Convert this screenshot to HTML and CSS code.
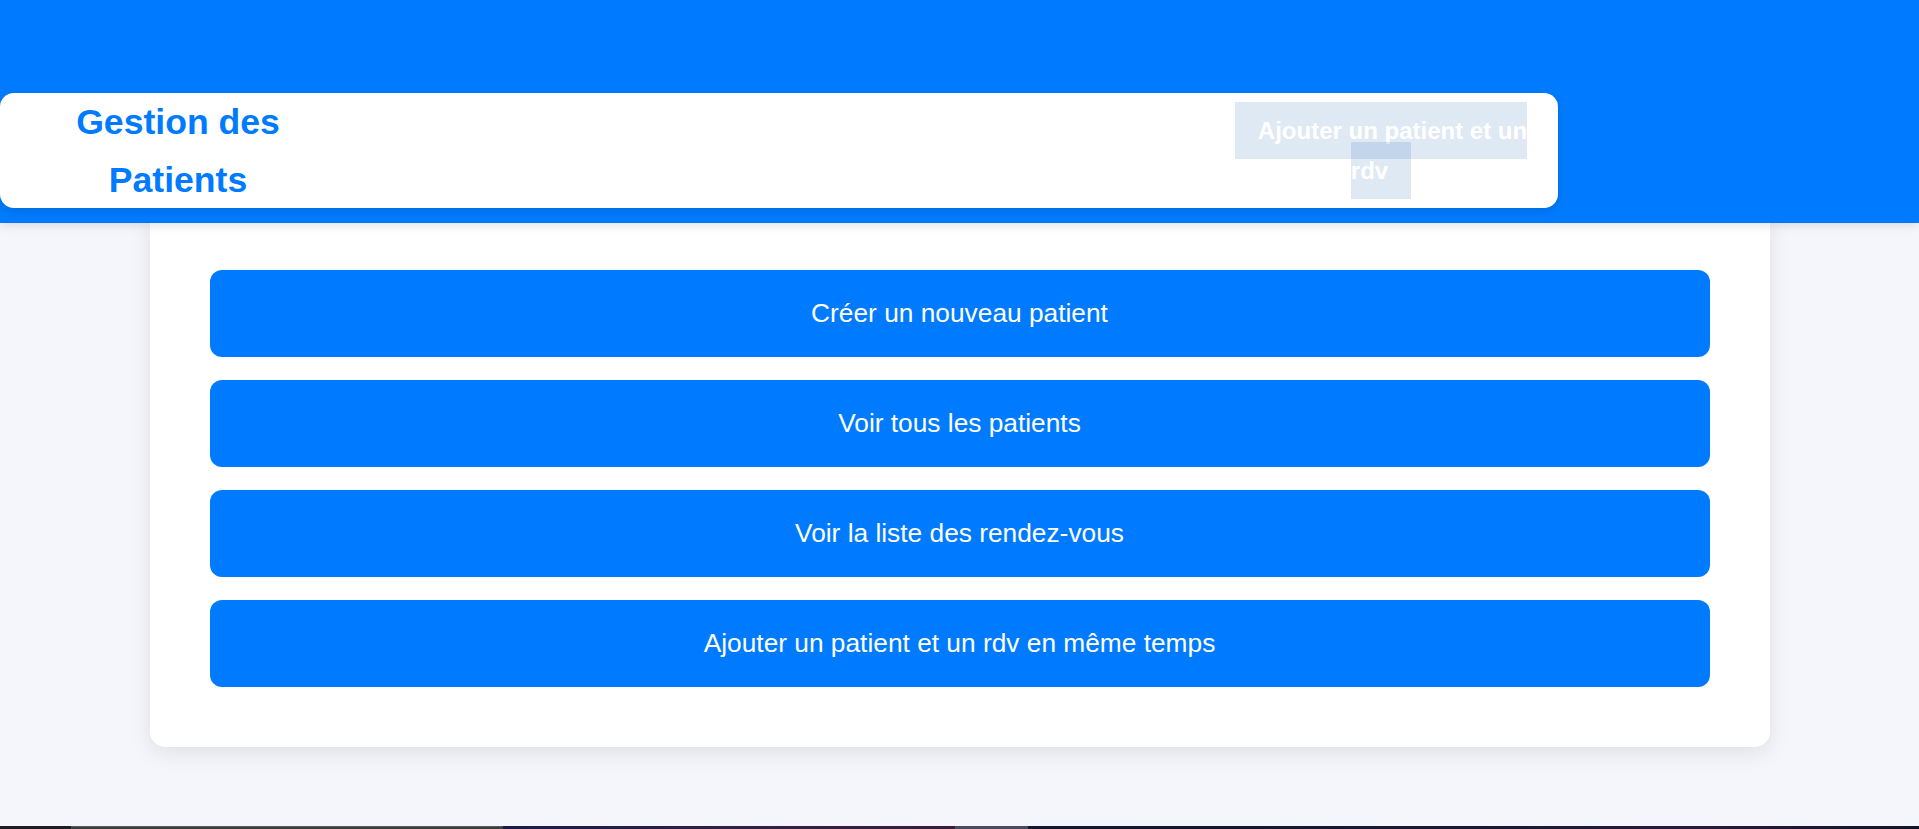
FILE: index.html
```html
<!DOCTYPE html>
<html lang="fr">
<head>
<meta charset="utf-8">
<title>Gestion des Patients</title>
<link rel="stylesheet" href="styles.css">
</head>
<body>
<div class="page">
  <header class="site-header">
    <nav class="nav">
      <h1 class="brand">Gestion des Patients</h1>
      <div class="nav-spacer"></div>
      <div class="nav-links">
        <a class="nav-link" href="#">Ajouter un patient et un rdv</a>
      </div>
    </nav>
  </header>
  <main class="card">
    <a class="action" href="#">Créer un nouveau patient</a>
    <a class="action" href="#">Voir tous les patients</a>
    <a class="action" href="#">Voir la liste des rendez-vous</a>
    <a class="action" href="#">Ajouter un patient et un rdv en même temps</a>
  </main>
  <div class="taskbar">
    <div class="tb tb-a"></div>
    <div class="tb tb-b"></div>
    <div class="tb tb-c"></div>
    <div class="tb tb-d"></div>
    <div class="tb tb-e"></div>
  </div>
</div>
</body>
</html>
```

FILE: styles.css
```css
* {
  box-sizing: border-box;
}

html, body {
  margin: 0;
  padding: 0;
}

body {
  background: #f4f6fb;
  font-family: "Liberation Sans", Arial, sans-serif;
}

.page {
  min-height: 100vh;
  display: flex;
  flex-direction: column;
}

.site-header {
  position: relative;
  z-index: 2;
  background: #007bff;
  height: 223px;
  padding-top: 93px;
  box-shadow: 0 2px 10px rgba(0, 0, 0, 0.12);
}

.nav {
  width: 1558px;
  height: 115px;
  background: #ffffff;
  border-radius: 14px;
  display: flex;
  align-items: center;
  padding-left: 53px;
  padding-right: 22px;
  box-shadow: 0 3px 10px rgba(0, 0, 0, 0.12);
}

.brand {
  margin: 0;
  width: 250px;
  padding-top: 2px;
  font-size: 35.6px;
  line-height: 57.5px;
  font-weight: bold;
  color: #007bff;
  text-align: center;
}

.nav-spacer {
  flex: 1;
}

.nav-links {
  width: 310px;
  text-align: center;
  font-size: 24px;
  line-height: 39.5px;
}

.nav-link {
  font-size: 24px;
  font-weight: bold;
  color: #ffffff;
  text-decoration: none;
  background: rgba(0, 80, 170, 0.125);
  padding: 15px 23px;
}

.card {
  position: relative;
  z-index: 1;
  width: 1620px;
  margin: -13px auto 0;
  background: #ffffff;
  border-radius: 15px;
  padding: 60px;
  display: flex;
  flex-direction: column;
  gap: 23px;
  box-shadow: 0 6px 22px rgba(0, 0, 0, 0.09);
}

.action {
  display: flex;
  align-items: center;
  justify-content: center;
  height: 87px;
  background: #007bff;
  color: #ffffff;
  border-radius: 12px;
  text-decoration: none;
  font-size: 26.3px;
}

.taskbar {
  margin-top: auto;
  height: 3px;
  display: flex;
}

.tb {
  height: 3px;
}

.tb-a {
  width: 71px;
  background: #1f1d22;
}

.tb-b {
  width: 432px;
  background: #3d3d3d;
  border-top: 1px solid #5a5a5a;
}

.tb-c {
  width: 452px;
  background: linear-gradient(90deg, #1b1b4e, #352046 60%, #3a1c3c);
}

.tb-d {
  width: 73px;
  background: #4a4a5c;
}

.tb-e {
  flex: 1;
  background: linear-gradient(90deg, #16162e, #1a1836 50%, #2a1a40 75%, #141428);
}
```
